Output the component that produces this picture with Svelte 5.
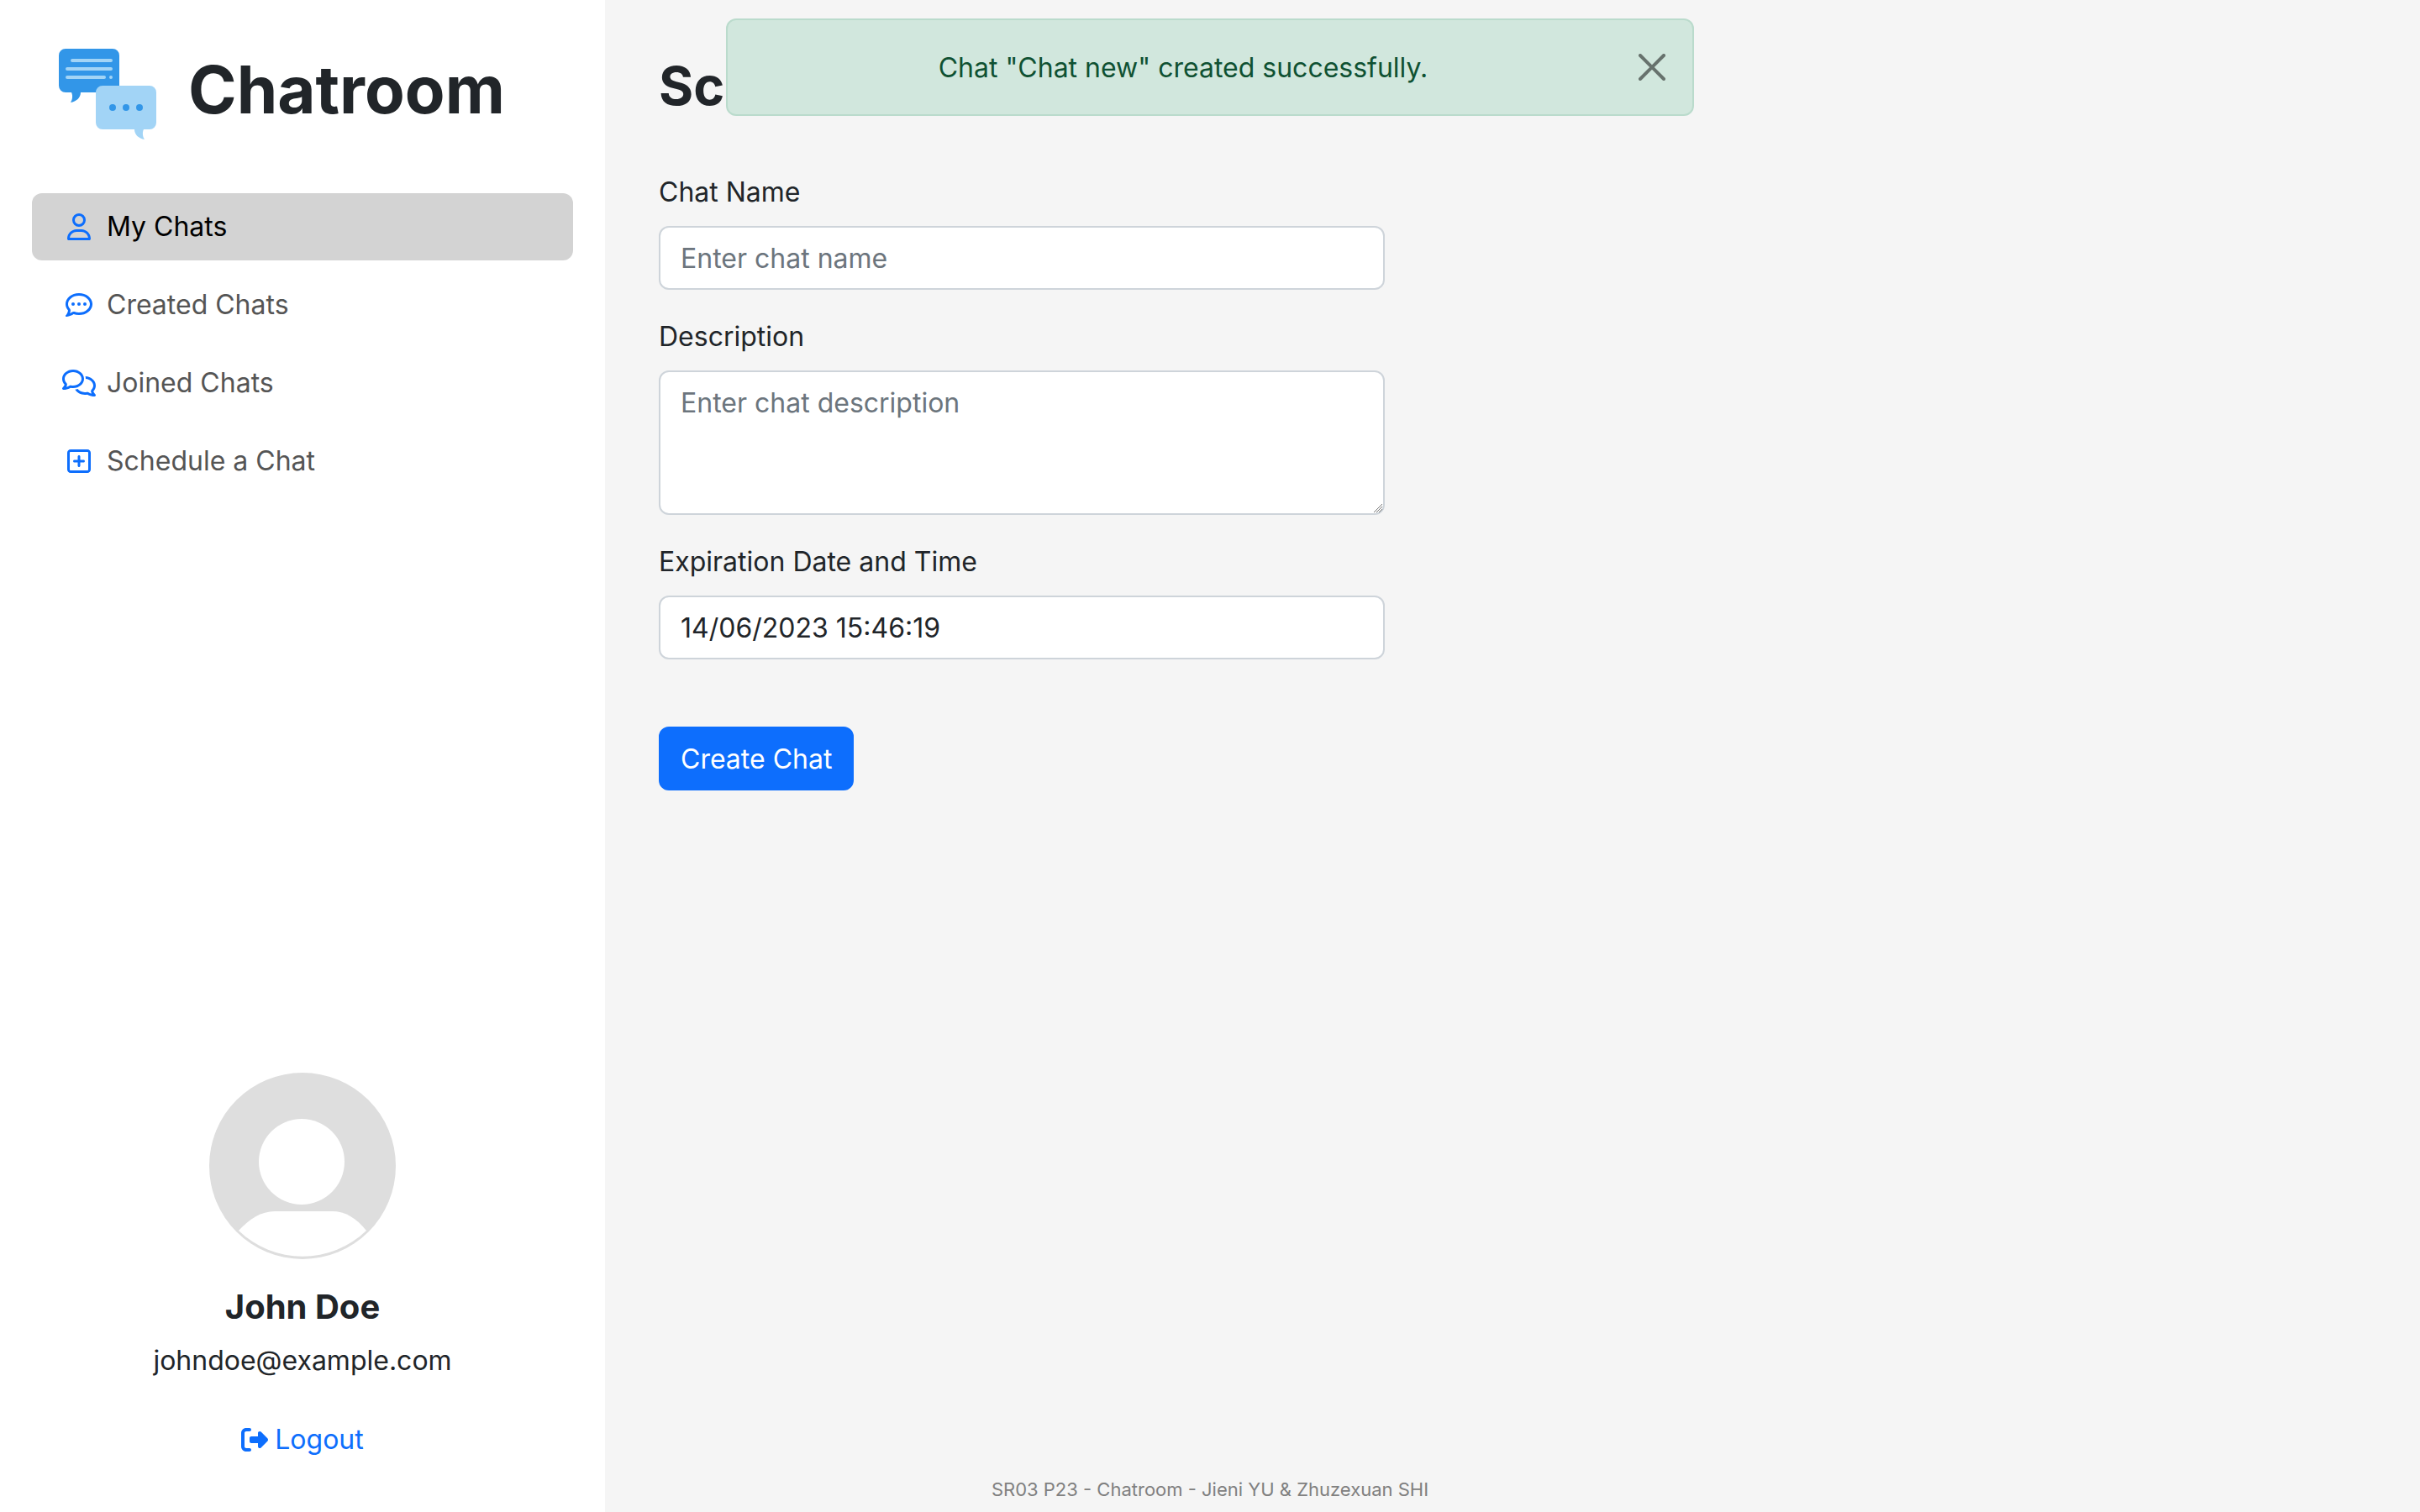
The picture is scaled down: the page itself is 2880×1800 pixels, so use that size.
<script>
  let showAlert = $state(true);
  let chatName = $state('');
  let description = $state('');
  let expiration = $state('14/06/2023 15:46:19');

  const links = [
    {
      label: 'My Chats',
      active: true,
      width: 448,
      path: 'M304 128a80 80 0 1 0 -160 0 80 80 0 1 0 160 0zM96 128a128 128 0 1 1 256 0A128 128 0 1 1 96 128zM49.3 464H398.7c-8.9-63.3-63.3-112-129-112H178.3c-65.7 0-120.1 48.7-129 112zM0 482.3C0 383.8 79.8 304 178.3 304h91.4C368.2 304 448 383.8 448 482.3c0 16.4-13.3 29.7-29.7 29.7H29.7C13.3 512 0 498.7 0 482.3z'
    },
    {
      label: 'Created Chats',
      active: false,
      width: 512,
      path: 'M168.2 384.9c-15-5.4-31.7-3.1-44.6 6.4c-8.2 6-22.3 14.8-39.4 22.7c5.6-14.7 9.9-31.3 11.3-49.4c1-12.9-3.3-25.7-11.8-35.5C60.4 302.8 48 272 48 240c0-79.5 83.3-160 208-160s208 80.5 208 160s-83.3 160-208 160c-31.6 0-61.3-5.5-87.8-15.1zM26.3 423.8c-1.6 2.7-3.3 5.4-5.1 8.1l-.3 .5c-1.6 2.3-3.2 4.6-4.8 6.9c-3.5 4.7-7.3 9.3-11.3 13.5c-4.6 4.6-5.9 11.4-3.4 17.4c2.5 6 8.3 9.9 14.8 9.9c5.1 0 10.2-.3 15.3-.8l.7-.1c4.4-.5 8.8-1.1 13.2-1.9c.8-.1 1.6-.3 2.4-.5c17.8-3.5 34.9-9.5 50.1-16.1c22.9-10 42.4-21.9 54.3-30.6c31.8 11.5 67 17.9 104.1 17.9c141.4 0 256-93.1 256-208S397.4 32 256 32S0 125.1 0 240c0 45.1 17.7 86.8 47.7 120.9c-1.9 24.5-11.4 46.3-21.4 62.9zM144 272a32 32 0 1 0 0-64 32 32 0 1 0 0 64zm144-32a32 32 0 1 0 -64 0 32 32 0 1 0 64 0zm80 32a32 32 0 1 0 0-64 32 32 0 1 0 0 64z'
    },
    {
      label: 'Joined Chats',
      active: false,
      width: 640,
      path: 'M88.2 309.1c9.8-18.3 6.8-40.8-7.5-55.8C59.4 230.9 48 204 48 176c0-63.5 63.8-128 160-128s160 64.5 160 128s-63.8 128-160 128c-13.1 0-25.8-1.3-37.8-3.6c-10.4-2-21.2-.6-30.7 4.2c-4.1 2.1-8.3 4.1-12.6 6c-16 7.2-32.9 13.5-49.9 18c2.8-4.6 5.4-9.1 7.9-13.6c1.1-1.9 2.2-3.9 3.2-5.9zM208 352c114.9 0 208-78.8 208-176S322.9 0 208 0S0 78.8 0 176c0 41.8 17.2 80.1 45.9 110.3c-.9 1.7-1.9 3.5-2.8 5.1c-10.3 18.4-22.3 36.5-36.6 52.1c-6.6 7-8.3 17.2-4.6 25.9C5.8 378.3 14.4 384 24 384c43 0 86.5-13.3 122.7-29.7c4.8-2.2 9.6-4.5 14.2-6.8c15.1 3 30.9 4.5 47.1 4.5zM432 480c16.2 0 31.9-1.6 47.1-4.5c4.6 2.3 9.4 4.6 14.2 6.8C529.5 498.7 573 512 616 512c9.6 0 18.2-5.7 22-14.5c3.8-8.8 2-19-4.6-25.9c-14.2-15.6-26.2-33.7-36.6-52.1c-.9-1.7-1.9-3.4-2.8-5.1C622.8 384.1 640 345.8 640 304c0-94.4-87.9-171.5-198.2-175.8c4.1 15.2 6.2 31.2 6.2 47.8l0 .6c87.2 6.7 144 67.5 144 127.4c0 28-11.4 54.9-32.7 77.2c-14.3 15-17.3 37.6-7.5 55.8c1.1 2 2.2 4 3.2 5.9c2.5 4.5 5.2 9 7.9 13.6c-17-4.5-33.9-10.7-49.9-18c-4.3-1.9-8.5-3.9-12.6-6c-9.5-4.8-20.3-6.2-30.7-4.2c-12.1 2.4-24.8 3.6-37.8 3.6c-61.7 0-110-26.5-136.8-62.3c-16 5.4-32.8 9.4-50 11.8C279 439.8 350 480 432 480z'
    },
    {
      label: 'Schedule a Chat',
      active: false,
      width: 448,
      path: 'M64 80c-8.8 0-16 7.2-16 16V416c0 8.8 7.2 16 16 16H384c8.8 0 16-7.2 16-16V96c0-8.8-7.2-16-16-16H64zM0 96C0 60.7 28.7 32 64 32H384c35.3 0 64 28.7 64 64V416c0 35.3-28.7 64-64 64H64c-35.3 0-64-28.7-64-64V96zM200 344V280H136c-13.3 0-24-10.7-24-24s10.7-24 24-24h64V168c0-13.3 10.7-24 24-24s24 10.7 24 24v64h64c13.3 0 24 10.7 24 24s-10.7 24-24 24H248v64c0 13.3-10.7 24-24 24s-24-10.7-24-24z'
    }
  ];
</script>

<div class="page">
  <aside class="sidebar">
    <header class="brand">
      <svg class="brand-logo" viewBox="0 0 116 108" aria-hidden="true">
        <path fill="#3296e8" d="M8 0H64a8 8 0 0 1 8 8V44a8 8 0 0 1-8 8H26C26 58 21 63 14 64C16 61 17 56 15 52H8a8 8 0 0 1-8-8V8a8 8 0 0 1 8-8z" />
        <g stroke="#a2d4f6" stroke-width="4" stroke-linecap="round">
          <path d="M16 14H62M10 24H62M10 34H54M62 34H62" />
        </g>
        <path fill="#a2d4f6" d="M52 44H108a8 8 0 0 1 8 8V88a8 8 0 0 1-8 8H101C99 100 100 105 102 108C95 107 90 102 90 96H52a8 8 0 0 1-8-8V52a8 8 0 0 1 8-8z" />
        <g fill="#3296e8">
          <circle cx="64" cy="70" r="4" />
          <circle cx="80" cy="70" r="4" />
          <circle cx="96" cy="70" r="4" />
        </g>
      </svg>
      <h1>Chatroom</h1>
    </header>

    <nav class="menu" aria-label="Chats">
      {#each links as link}
        <a class="menu-link" class:active={link.active} href="#chats" aria-current={link.active ? 'page' : undefined}>
          <span class="menu-icon">
            <svg viewBox="0 0 {link.width} 512" aria-hidden="true"><path d={link.path} /></svg>
          </span>
          {link.label}
        </a>
      {/each}
    </nav>

    <section class="profile">
      <svg class="avatar" viewBox="0 0 224 224" role="img" aria-label="Profile picture">
        <circle cx="112" cy="112" r="111" fill="#dedede" />
        <circle cx="111" cy="107" r="51" fill="#fff" />
        <path fill="#fff" d="M36 189C49 175 63 166 79 166H147C163 166 176 174 188 189A109 109 0 0 1 36 189z" />
      </svg>
      <h2>John Doe</h2>
      <p>johndoe@example.com</p>
      <a class="logout" href="#logout">
        <svg viewBox="0 0 512 512" aria-hidden="true">
          <path d="M377.9 105.9L500.7 228.7c7.2 7.2 11.3 17.1 11.3 27.3s-4.1 20.1-11.3 27.3L377.9 406.1c-6.4 6.4-15 9.9-24 9.9c-18.7 0-33.9-15.2-33.9-33.9l0-62.1-128 0c-17.7 0-32-14.3-32-32l0-64c0-17.7 14.3-32 32-32l128 0 0-62.1c0-18.7 15.2-33.9 33.9-33.9c9 0 17.6 3.6 24 9.9zM160 96L96 96c-17.7 0-32 14.3-32 32l0 256c0 17.7 14.3 32 32 32l64 0c17.7 0 32 14.3 32 32s-14.3 32-32 32l-64 0c-53 0-96-43-96-96L0 128C0 75 43 32 96 32l64 0c17.7 0 32 14.3 32 32s-14.3 32-32 32z" />
        </svg>
        Logout
      </a>
    </section>
  </aside>

  <main class="content">
    <h2 class="title">Schedule a Chat</h2>
    <form class="form" onsubmit={(event) => event.preventDefault()}>
      <div class="field">
        <label for="chat-name">Chat Name</label>
        <input id="chat-name" type="text" placeholder="Enter chat name" bind:value={chatName} />
      </div>
      <div class="field">
        <label for="chat-description">Description</label>
        <div class="textarea-box">
          <textarea id="chat-description" rows="3" placeholder="Enter chat description" bind:value={description}></textarea>
          <svg class="grip" viewBox="0 0 10 10" aria-hidden="true">
            <path d="M0 10L10 0M3 10L10 3M6 10L10 6" />
          </svg>
        </div>
      </div>
      <div class="field">
        <label for="chat-expiration">Expiration Date and Time</label>
        <input id="chat-expiration" type="text" bind:value={expiration} />
      </div>
      <button class="submit" type="submit">Create Chat</button>
    </form>
  </main>

  {#if showAlert}
    <div class="alert" role="alert">
      <span>Chat "Chat new" created successfully.</span>
      <button class="close" type="button" aria-label="Close" onclick={() => (showAlert = false)}>
        <svg viewBox="0 0 16 16" aria-hidden="true">
          <path d="M.293.293a1 1 0 0 1 1.414 0L8 6.586 14.293.293a1 1 0 1 1 1.414 1.414L9.414 8l6.293 6.293a1 1 0 0 1-1.414 1.414L8 9.414l-6.293 6.293a1 1 0 0 1-1.414-1.414L6.586 8 .293 1.707a1 1 0 0 1 0-1.414z" />
        </svg>
      </button>
    </div>
  {/if}

  <footer class="footer">SR03 P23 - Chatroom - Jieni YU &amp; Zhuzexuan SHI</footer>
</div>

<style>
  :global(body) {
    margin: 0;
    background: #f5f5f5;
  }

  .page,
  .page * {
    box-sizing: border-box;
  }

  .page {
    position: relative;
    display: grid;
    grid-template-columns: 25% 1fr;
    min-height: 100vh;
    color: #212529;
    font: 400 32px/48px Inter, "Liberation Sans", sans-serif;
  }

  h1,
  h2,
  p {
    margin: 0;
  }

  svg {
    display: block;
  }

  a {
    color: #0d6efd;
    text-decoration: none;
  }

  .sidebar {
    display: flex;
    flex-direction: column;
    padding: 58px 38px 62px;
    background: #fff;
  }

  .brand {
    display: flex;
    align-items: flex-start;
    gap: 38px;
    height: 108px;
    padding: 0 32px;
    margin-bottom: 64px;
  }

  .brand-logo {
    flex: none;
    width: 116px;
    height: 108px;
  }

  h1 {
    font-size: 78px;
    line-height: 98px;
    font-weight: 700;
  }

  .menu {
    display: flex;
    flex-direction: column;
    gap: 13px;
  }

  .menu-link {
    display: flex;
    align-items: center;
    gap: 13px;
    padding: 16px 36px;
    border-radius: 12px;
    color: #555;
  }

  .menu-link.active {
    background: #d3d3d3;
    color: #000;
  }

  .menu-icon {
    display: flex;
    justify-content: center;
    width: 40px;
  }

  .menu-icon svg {
    height: 32px;
    fill: #0d6efd;
  }

  .profile {
    display: flex;
    flex-direction: column;
    align-items: center;
    margin-top: auto;
  }

  .avatar {
    width: 224px;
    height: 224px;
    margin-bottom: 32px;
  }

  .profile h2 {
    margin-bottom: 16px;
    font-size: 40px;
    line-height: 48px;
    font-weight: 700;
  }

  .logout {
    display: flex;
    align-items: center;
    gap: 8px;
    margin-top: 46px;
  }

  .logout svg {
    width: 32px;
    height: 32px;
    fill: #0d6efd;
  }

  .content {
    padding: 64px;
  }

  .title {
    margin-bottom: 64px;
    font-size: 63px;
    line-height: 77px;
    font-weight: 700;
  }

  .form {
    display: flex;
    flex-direction: column;
    align-items: flex-start;
    gap: 32px;
    width: 30vw;
  }

  .field {
    display: flex;
    flex-direction: column;
    gap: 16px;
    width: 100%;
  }

  input,
  textarea {
    display: block;
    width: 100%;
    margin: 0;
    padding: 13px 24px 11px;
    border: 2px solid #ced4da;
    border-radius: 12px;
    background: #fff;
    color: #212529;
    font: inherit;
  }

  textarea {
    resize: none;
  }

  input::placeholder,
  textarea::placeholder {
    color: #6c757d;
    opacity: 1;
  }

  .textarea-box {
    position: relative;
  }

  .grip {
    position: absolute;
    right: 3px;
    bottom: 3px;
    width: 10px;
    height: 10px;
    fill: none;
    stroke: #777;
  }

  .submit {
    margin-top: 48px;
    padding: 13px 24px 11px;
    border: 2px solid #0d6efd;
    border-radius: 12px;
    background: #0d6efd;
    color: #fff;
    font: inherit;
  }

  .alert {
    position: absolute;
    top: 22px;
    left: 30%;
    width: 40%;
    padding: 33px 96px 31px 32px;
    border: 2px solid #badbcc;
    border-radius: 12px;
    background: #d1e7dd;
    color: #0f5132;
    text-align: center;
  }

  .close {
    position: absolute;
    top: 0;
    right: 0;
    padding: 40px 32px;
    border: 0;
    background: none;
    opacity: 0.5;
  }

  .close svg {
    width: 32px;
    height: 32px;
  }

  .footer {
    position: absolute;
    right: 0;
    bottom: 11px;
    left: 0;
    color: #808080;
    font-size: 22px;
    line-height: 32px;
    text-align: center;
  }
</style>
